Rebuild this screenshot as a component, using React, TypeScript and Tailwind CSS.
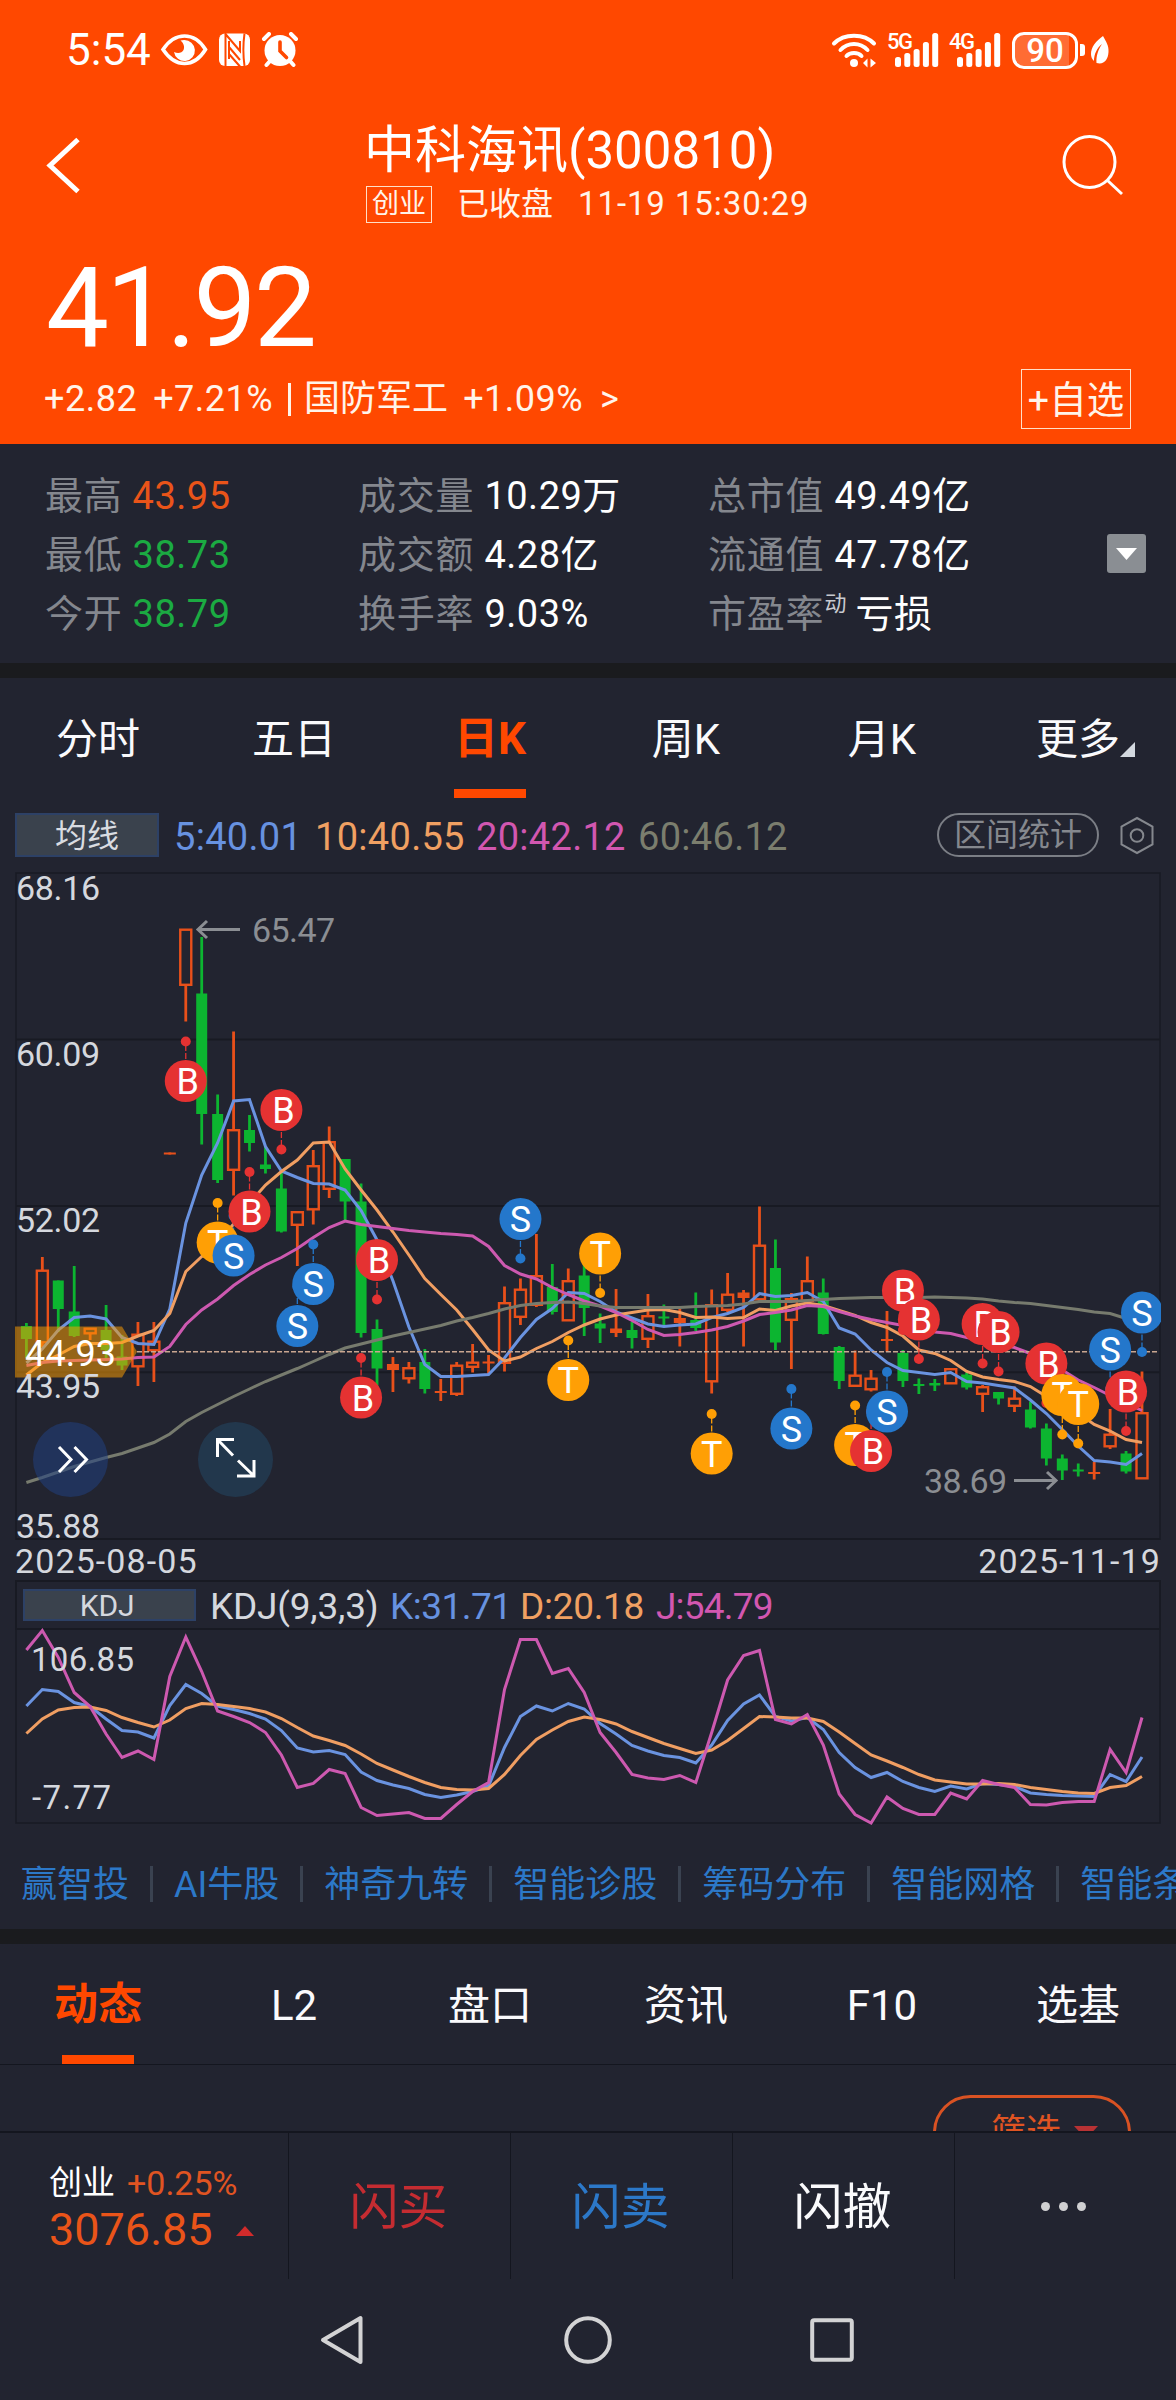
type Kind = "r" | "g" | "f";

// kind, body top, body bottom, high, low  (r = hollow up, f = flat up, g = down)
const candles: [Kind, number, number, number, number][] = [
  ["g", 1326, 1339, 1323, 1358], ["r", 1270, 1343, 1257, 1347], ["g", 1280.5, 1309, 1280.5, 1332],
  ["g", 1311.5, 1336, 1266, 1337], ["r", 1328, 1334, 1328, 1340], ["g", 1330, 1350, 1305, 1358],
  ["g", 1356.5, 1365.5, 1335, 1370], ["r", 1334, 1367, 1322, 1386], ["r", 1341, 1351, 1322, 1382],
  ["f", 1152.5, 1154.5, 1152.5, 1154.5], ["r", 929, 985.5, 929, 1021.5], ["g", 993.5, 1114, 937, 1144.5],
  ["g", 1114, 1180, 1094.5, 1183], ["r", 1129.5, 1170.5, 1031.5, 1195.5], ["g", 1130, 1143, 1115, 1151.5],
  ["g", 1164.5, 1169, 1147, 1173.5], ["g", 1188.5, 1231.5, 1171.5, 1232.5], ["r", 1211.5, 1225.5, 1211.5, 1266],
  ["r", 1165.5, 1210, 1150, 1224.5], ["r", 1141.5, 1189.5, 1126.5, 1198], ["g", 1159, 1201.5, 1159, 1220],
  ["g", 1201.5, 1333, 1183.5, 1337.5], ["g", 1329, 1368.5, 1319.5, 1385.5], ["f", 1364, 1370, 1357, 1392],
  ["r", 1367.5, 1379, 1362, 1383.5], ["g", 1362, 1389, 1349, 1393.5], ["f", 1391, 1393, 1379, 1401],
  ["r", 1365, 1394.5, 1362, 1396], ["r", 1362, 1367.5, 1344, 1372.5], ["f", 1361.5, 1363.5, 1355, 1375],
  ["r", 1302.5, 1363.5, 1286.5, 1371.5], ["r", 1289, 1317.5, 1278.5, 1325], ["r", 1275.5, 1305.5, 1234, 1307],
  ["g", 1287, 1312, 1264, 1314.5], ["r", 1280.5, 1321, 1268.5, 1321], ["g", 1275.5, 1308, 1263, 1336],
  ["g", 1323.5, 1328.5, 1313.5, 1343], ["f", 1328.5, 1333, 1289, 1337], ["g", 1330, 1338, 1322, 1348.5],
  ["r", 1315.5, 1339.5, 1294, 1348], ["g", 1316.5, 1318.5, 1304.5, 1326], ["f", 1318, 1323, 1309, 1346.5],
  ["g", 1320, 1328, 1292.5, 1331], ["r", 1304.5, 1382, 1289.5, 1393.5], ["r", 1294, 1310.5, 1273, 1312],
  ["f", 1292.5, 1298, 1290, 1346.5], ["r", 1245, 1300, 1206.5, 1303], ["g", 1268, 1342.5, 1239.5, 1350],
  ["r", 1298.5, 1320.5, 1293, 1369], ["r", 1280.5, 1301.5, 1256.5, 1303], ["g", 1292.5, 1334, 1278.5, 1334.5],
  ["g", 1347, 1381, 1346, 1389], ["r", 1375, 1386.5, 1350.5, 1387], ["r", 1378, 1390, 1370, 1391.5],
  ["f", 1339, 1341, 1311, 1352], ["g", 1353, 1381, 1350, 1387], ["g", 1384, 1386, 1378.5, 1394],
  ["g", 1383, 1385.5, 1379, 1391], ["r", 1368.5, 1384, 1368.5, 1384], ["g", 1374.5, 1387.5, 1372.5, 1389.5],
  ["r", 1386.5, 1394.5, 1385, 1412], ["g", 1392, 1398.5, 1392, 1404.5], ["r", 1398, 1406.5, 1386.5, 1412],
  ["g", 1409.5, 1427.5, 1401.5, 1428.5], ["g", 1428.5, 1458.5, 1423.5, 1465.5], ["g", 1458.5, 1470.5, 1454.5, 1480],
  ["g", 1469.5, 1471.5, 1463.5, 1476.5], ["f", 1472, 1474, 1462, 1479.5], ["r", 1434, 1447, 1409, 1449],
  ["g", 1453.5, 1471.5, 1451, 1473.5], ["r", 1412.5, 1479, 1371.5, 1479],
];

const ma5 = [1363, 1349, 1330, 1317.5, 1316, 1319, 1337.5, 1343.5, 1344.5, 1309, 1223, 1175, 1143, 1101, 1099.5, 1146.5, 1171, 1177.5, 1183.5, 1184, 1190, 1210.5, 1240, 1281, 1327, 1364.5, 1376.5, 1376.5, 1375.5, 1374.5, 1358, 1337.5, 1319.5, 1308.5, 1292.5, 1293.5, 1301.5, 1312, 1318, 1324, 1326.5, 1325, 1324, 1317.5, 1313.5, 1307.5, 1293.5, 1296.5, 1295.5, 1292.5, 1301.5, 1328, 1334, 1350, 1362.5, 1370.5, 1372.5, 1374.5, 1372.5, 1381.5, 1383, 1385.5, 1388, 1400, 1413.5, 1429.5, 1446, 1460.5, 1462, 1464.5, 1453.5];
const ma10 = [1375, 1362.5, 1355, 1346.5, 1343.5, 1343.5, 1342.5, 1336, 1330.5, 1313.5, 1271.5, 1256.5, 1243, 1224, 1203, 1185, 1171.5, 1160, 1143, 1142, 1169, 1190, 1210, 1232, 1255, 1278.5, 1294.5, 1310, 1329.5, 1350, 1361, 1357, 1348.5, 1341.5, 1332.5, 1325, 1319, 1315, 1312.5, 1310, 1309.5, 1312.5, 1317.5, 1317, 1318.5, 1317.5, 1309, 1310.5, 1306, 1303, 1305.5, 1310.5, 1315.5, 1322.5, 1327.5, 1336, 1350, 1353.5, 1360.5, 1371.5, 1377, 1379.5, 1381.5, 1386.5, 1396.5, 1405, 1413, 1424.5, 1431, 1439.5, 1442.5];
const ma20 = [1365.5, 1362.5, 1361, 1360.5, 1360, 1359.5, 1359, 1357.5, 1357, 1346.5, 1324.5, 1310, 1299, 1285.5, 1274.5, 1265, 1257.5, 1248.5, 1237.5, 1227.5, 1221, 1224.5, 1226.5, 1228.5, 1230.5, 1232, 1233.5, 1234.5, 1236, 1246.5, 1265.5, 1274, 1279, 1287.5, 1294.5, 1301, 1306, 1312.5, 1320.5, 1329.5, 1335.5, 1334.5, 1332.5, 1330, 1326.5, 1321, 1314.5, 1312.5, 1310, 1305.5, 1306.5, 1311.5, 1316, 1319.5, 1322.5, 1325.5, 1328.5, 1332, 1333.5, 1337.5, 1340, 1344, 1347.5, 1353.5, 1361.5, 1370, 1380, 1387.5, 1395.5, 1403.5, 1410.5];
const ma60 = [1482.5, 1477.5, 1472, 1466.5, 1462, 1457.5, 1453.5, 1448, 1442.5, 1434, 1421.5, 1412.5, 1404.5, 1396.5, 1389, 1381.5, 1375, 1368.5, 1361.5, 1354.5, 1348, 1344, 1340, 1336, 1332.5, 1329, 1325.5, 1321, 1317.5, 1313.5, 1309, 1305.5, 1303.5, 1302.5, 1302, 1303.5, 1306, 1307.5, 1307.5, 1307.5, 1307.5, 1307.5, 1306.5, 1306, 1305.5, 1304, 1301.5, 1301.5, 1301.5, 1300.5, 1299.5, 1298.5, 1298, 1297.5, 1297.5, 1297.5, 1297.5, 1297, 1297.5, 1298, 1299, 1301, 1302.5, 1303.5, 1305.5, 1307.5, 1309.5, 1312, 1313.5, 1318.5, 1320];

const lineJ = [1650, 1630.5, 1657.5, 1692.5, 1706.5, 1734, 1757.5, 1751, 1759.5, 1676.5, 1637, 1671.5, 1711, 1716.5, 1722.5, 1732.5, 1755, 1787.5, 1783.5, 1769.5, 1773.5, 1807.5, 1815.5, 1814, 1812.5, 1818.5, 1818.5, 1804.5, 1791.5, 1782.5, 1689.5, 1639.5, 1639.5, 1673.5, 1668.5, 1692.5, 1732.5, 1752.5, 1774.5, 1778, 1779.5, 1775.5, 1782.5, 1732.5, 1680, 1655.5, 1650.5, 1719.5, 1724, 1714.5, 1745, 1794, 1814.5, 1823, 1797, 1808.5, 1814.5, 1814.5, 1793, 1799, 1780.5, 1784.5, 1787.5, 1804.5, 1805, 1802.5, 1801.5, 1801.5, 1749.5, 1772.5, 1717.5];
const lineK = [1706, 1689.5, 1691.5, 1702.5, 1706.5, 1719, 1730.5, 1732, 1738, 1705.5, 1684.5, 1693.5, 1706, 1709.5, 1713.5, 1719, 1730.5, 1748, 1752, 1750.5, 1754.5, 1772, 1780.5, 1785, 1788.5, 1794.5, 1797.5, 1795, 1791.5, 1786, 1747.5, 1716.5, 1706, 1711, 1703.5, 1709, 1723.5, 1734, 1745.5, 1751, 1755.5, 1757.5, 1763, 1745, 1720.5, 1704, 1695, 1716.5, 1721, 1717.5, 1729.5, 1752.5, 1767.5, 1777.5, 1772.5, 1781.5, 1787.5, 1791.5, 1786, 1789, 1783.5, 1784.5, 1786.5, 1793, 1794.5, 1795.5, 1796, 1796.5, 1774.5, 1781.5, 1757];
const lineD = [1733.5, 1719, 1710, 1707.5, 1707, 1710.5, 1717.5, 1722.5, 1727, 1720, 1708.5, 1703.5, 1704.5, 1706.5, 1708.5, 1712, 1718.5, 1727.5, 1736, 1740.5, 1745.5, 1754, 1763.5, 1770, 1776.5, 1782.5, 1787.5, 1789.5, 1790, 1788.5, 1774.5, 1755.5, 1739.5, 1730, 1721.5, 1717, 1719.5, 1724, 1731.5, 1737.5, 1743.5, 1748.5, 1753.5, 1750, 1740.5, 1728.5, 1716.5, 1717, 1718, 1718, 1721.5, 1732, 1743.5, 1755, 1761, 1767.5, 1774.5, 1780, 1782, 1784, 1784, 1783.5, 1784.5, 1787.5, 1789.5, 1791.5, 1793, 1793.5, 1787.5, 1785.5, 1776.5];

// candle index, letter, centre y, side of the anchor dot (-1 above, 1 below)
const markers: [number, "B" | "S" | "T", number, number][] = [
  [10, "B", 1081, -1], [12, "T", 1242.5, -1], [13, "S", 1255.5, -1], [14, "B", 1211.5, -1],
  [16, "B", 1110, 1], [17, "S", 1326, -1], [18, "S", 1284, -1], [21, "B", 1397.5, -1],
  [22, "B", 1260, 1], [31, "S", 1219, 1], [34, "T", 1380, -1], [36, "T", 1253.5, 1],
  [43, "T", 1453.5, -1], [48, "S", 1428.5, -1], [52, "T", 1445, -1], [53, "B", 1451, -1],
  [54, "S", 1411.5, -1], [55, "B", 1290.5, 1], [56, "B", 1319.5, 1], [60, "B", 1324, 1],
  [61, "B", 1332, 1], [64, "B", 1363.5, 1], [65, "T", 1395, 1], [66, "T", 1404, 1],
  [68, "S", 1349.5, 1], [69, "B", 1391.5, 1], [70, "S", 1312.5, 1],
];

const markerColor = { B: "#e53232", S: "#2477cb", T: "#ff9f05" };
const UP = "#e8501a";
const DOWN = "#0cb530";

const px = (i: number) => 26.4 + i * 15.937;
const toPoints = (ys: number[]) => ys.map((y, i) => `${px(i).toFixed(1)},${y}`).join(" ");

const stats = [
  [
    { label: "最高", value: "43.95", color: "text-[#ea5419]" },
    { label: "最低", value: "38.73", color: "text-[#1bab42]" },
    { label: "今开", value: "38.79", color: "text-[#1bab42]" },
  ],
  [
    { label: "成交量", value: "10.29万", color: "text-white" },
    { label: "成交额", value: "4.28亿", color: "text-white" },
    { label: "换手率", value: "9.03%", color: "text-white" },
  ],
  [
    { label: "总市值", value: "49.49亿", color: "text-white" },
    { label: "流通值", value: "47.78亿", color: "text-white" },
    { label: "市盈率", sup: "动", value: "亏损", color: "text-white" },
  ],
];

const links = ["赢智投", "AI牛股", "神奇九转", "智能诊股", "筹码分布", "智能网格", "智能条件"];

function SignalBars() {
  return (
    <svg width="44" height="34" viewBox="0 0 44 34" fill="#fff">
      <rect x="0" y="24" width="6" height="10" rx="2.5" />
      <rect x="9.3" y="20" width="6" height="14" rx="2.5" />
      <rect x="18.6" y="16" width="6" height="18" rx="2.5" />
      <rect x="27.9" y="9" width="6" height="25" rx="2.5" />
      <rect x="37.2" y="0" width="6" height="34" rx="2.5" />
    </svg>
  );
}

function StatusBar() {
  return (
    <div className="flex h-[100px] items-center pl-[66px] text-white">
      <span className="w-[94px] text-[44px] leading-[60px]">5:54</span>
      <svg width="140" height="36" viewBox="160 32 140 36">
        <path d="M163 49.500C170 39 177 36 184.500 36S199 39 205.500 49.500C199 60 192 63.500 184.500 63.500S170 60 163 49.500Z" fill="none" stroke="#fff" strokeWidth="3.600" />
        <path d="M184 40a10.500 10.500 0 1 1-10 12c4 2 8 1 9.500-2s0-7-3-9.500z" fill="#fff" />
        <rect x="219" y="33.500" width="31" height="32.500" rx="6" fill="#fff" />
        <path d="M225 33.500L240 51V41M225.500 33V66M229 47L240 60M229 54L240 66.500M244.500 33.500C243 44 243 55 244.500 66M229 41V59" fill="none" stroke="#ff4800" strokeWidth="2" />
        <circle cx="280" cy="50.500" r="15.500" fill="#fff" />
        <path d="M264 39l5-5M296 39l-5-5M270 61l-3.500 4M290 61l3.500 4" stroke="#fff" strokeWidth="4" strokeLinecap="round" />
        <path d="M280 42v9l6.500 6.500" fill="none" stroke="#ff4800" strokeWidth="3.600" strokeLinecap="round" />
      </svg>

      <svg className="ml-[531px]" width="46" height="36" viewBox="831 31 46 36" fill="none" stroke="#fff" strokeWidth="4" strokeLinecap="round">
        <path d="M834 42.500C844 32 864 32 874 42.500" />
        <path d="M840.500 49C848 41 860 41 867.500 49" />
        <path d="M846.500 55C850 51 858 51 861.500 55" />
        <circle cx="854" cy="62" r="4" fill="#fff" stroke="none" />
        <path d="M863 62l4.500-4.500v9zM876 62l-5.500-4.500v9z" fill="#fff" stroke="none" />
      </svg>
      <div className="relative ml-[18px] h-[34px] w-[44px]">
        <span className="absolute -left-[8px] top-0 text-[22px] font-medium leading-[17px] tracking-[-1.5px]">5G</span>
        <SignalBars />
      </div>
      <div className="relative ml-[18px] h-[34px] w-[44px]">
        <span className="absolute -left-[8px] top-0 text-[22px] font-medium leading-[17px] tracking-[-1.5px]">4G</span>
        <SignalBars />
      </div>
      <div className="ml-[11px] flex h-[37px] w-[66px] items-center justify-center rounded-[12px] border-[3px] border-white bg-[linear-gradient(90deg,#ff6c34_90%,#ff4800_90%)] text-[33px] font-medium leading-[37px]">
        90
      </div>
      <div className="ml-[2px] h-[12px] w-[5px] rounded-r-[3px] bg-white" />
      <svg className="ml-[5px]" width="20" height="30" viewBox="0 0 20 30">
        <path d="M13 1C6 6 1 12 1 19c0 3 1 5 3 7C4 19 7 13 12 9 8 15 6 21 6.500 28 14 30 18 25 18.500 17 19 10 16 7 13 1z" fill="#fff" />
      </svg>
    </div>
  );
}

function Header() {
  return (
    <header className="h-[444px] bg-[#ff4800] text-white">
      <StatusBar />

      <div className="flex h-[134px]">
        <div className="w-[364px] pl-[45px] pt-[36px]">
          <svg width="38" height="58" viewBox="46 136 38 58">
            <path d="M79 139.500L51 165.500L79 191.500" fill="none" stroke="#fff" strokeWidth="5" />
          </svg>
        </div>
        <div className="pt-[20px]">
          <h1 className="whitespace-nowrap text-[51px] leading-[61px]">中科海讯(300810)</h1>
          <div className="flex h-[46px] items-center whitespace-nowrap">
            <span className="ml-[2px] h-[37px] w-[66px] border border-[#ffe0c8] text-center text-[27px] leading-[35px] text-[#fff4ea]">
              创业
            </span>
            <span className="ml-[25px] text-[32px] leading-[46px] text-[#fff4ea]">已收盘</span>
            <span className="ml-[25px] text-[33px] leading-[46px] tracking-[0.9px] text-[#fff4ea]">11-19 15:30:29</span>
          </div>
        </div>
        <svg className="ml-auto mr-[50px] mt-[32px]" width="66" height="66" viewBox="1060 132 66 66" fill="none" stroke="#fff" strokeWidth="3">
          <circle cx="1089.500" cy="162" r="25.500" />
          <path d="M1107 180L1122 194" />
        </svg>
      </div>

      <p className="mt-[18px] pl-[46px] text-[112px] leading-[112px] tracking-[-2.6px]">41.92</p>

      <div className="mt-[5px] flex h-[60px] items-center pl-[44px] pr-[45px] text-[36px] leading-[60px] text-[#fff4ea]">
        <span className="tracking-[0.5px]">+2.82</span>
        <span className="ml-[16px] tracking-[0.5px]">+7.21%</span>
        <span className="ml-[15px] h-[33px] w-[3px] bg-[#fff4ea]" />
        <span className="ml-[13px] text-[36px]">国防军工</span>
        <span className="ml-[15px] tracking-[0.5px]">+1.09%</span>
        <span className="ml-[17px]">&gt;</span>
        <button className="ml-auto h-[60px] w-[110px] whitespace-nowrap border border-[#ffe0c8] text-[37.500px] leading-[60px]">
          +自选
        </button>
      </div>
    </header>
  );
}

function Stats() {
  return (
    <section className="relative flex h-[219px] pl-[45px] pt-[23px] text-[38px]">
      {stats.map((col, c) => (
        <div key={c} className={c === 0 ? "w-[313px]" : c === 1 ? "w-[350px]" : "w-[330px]"}>
          {col.map((s) => (
            <div key={s.label} className="flex h-[59px] whitespace-nowrap leading-[59px]">
              <span className="text-[#84878e] tracking-[0.8px]">{s.label}</span>
              {"sup" in s && <span className="text-[22px] leading-[38px] text-[#c8cacf]">{s.sup}</span>}
              <span className={`${"sup" in s ? "ml-[9px]" : "ml-[10px]"} tracking-[0.5px] ${s.color}`}>{s.value}</span>
            </div>
          ))}
        </div>
      ))}
      <button className="ml-auto mr-[30px] mt-[67px] flex h-[39px] w-[39px] items-center justify-center rounded-[3px] bg-[#8a8e93]">
        <svg width="21" height="12" viewBox="0 0 21 12">
          <path d="M0 0h21L10.500 12z" fill="#fff" />
        </svg>
      </button>
    </section>
  );
}

function Tabs({ items, active }: { items: string[]; active: number }) {
  return (
    <nav className="grid h-[120px] grid-cols-6">
      {items.map((item, i) => (
        <div key={item} className="relative flex flex-col items-center">
          <span
            className={`flex h-[111px] items-end pb-[19px] leading-[61px] ${
              i === active ? "text-[44px] font-bold text-[#ff4800]" : "text-[42px] text-[#fafafc]"
            }`}
          >
            {item}
          </span>
          {i === active && <span className="h-[9px] w-[72px] bg-[#ff4800]" />}
          {item === "更多" && (
            <svg className="absolute left-[140px] top-[64px]" width="15" height="15" viewBox="0 0 15 15">
              <path d="M15 0v15H0z" fill="#d3d8df" />
            </svg>
          )}
        </div>
      ))}
    </nav>
  );
}

function AverageRow() {
  return (
    <div className="flex h-[74px] items-center pl-[15px] text-[38px] leading-[44px] tracking-[0.3px]">
      <button className="h-[44px] w-[144px] border-2 border-[#2d4166] bg-[#3a424d] text-[32px] leading-[42px] tracking-normal text-[#d9dce1]">
        均线
      </button>
      <span className="ml-[15px] w-[141px] pt-[4px] text-[#6792e0]">5:40.01</span>
      <span className="w-[161px] pt-[4px] text-[#f0a062]">10:40.55</span>
      <span className="w-[162px] pt-[4px] text-[#d257b0]">20:42.12</span>
      <span className="pt-[4px] text-[#7b7e6e]">60:46.12</span>
      <button className="ml-auto h-[44px] w-[162px] rounded-full border-2 border-[#7b7e85] text-[32px] leading-[41px] tracking-normal text-[#85888e]">
        区间统计
      </button>
      <svg className="ml-[20px] mr-[21px]" width="36" height="40" viewBox="1119 815.500 36 40" fill="none" stroke="#85888e" strokeWidth="2">
        <path d="M1137 818.500L1152.500 827V845L1137 853.500L1121.500 845V827Z" />
        <circle cx="1137" cy="836" r="6.300" />
      </svg>
    </div>
  );
}

function Marker({ i, kind, y }: { i: number; kind: "B" | "S" | "T"; y: number }) {
  return (
    <g>
      <circle cx={px(i)} cy={y} r="21" fill={markerColor[kind]} />
      <text x={px(i) + (kind === "B" ? 2 : 0)} y={y + 13} fontSize="36" fill="#fff" textAnchor="middle">
        {kind}
      </text>
    </g>
  );
}

function PriceChart() {
  return (
    <svg className="ml-[15px] block" width="1146" height="668" viewBox="15 872 1146 668">
      <g stroke="#181a23" strokeWidth="2" fill="none">
        <path d="M16 1540V873H1160V1540" strokeWidth="1.500" />
        <path d="M16 1039.500H1160M16 1206H1160M16 1372.300H1160M16 1539H1160" />
      </g>

      {candles.map(([k, top, bottom, high, low], i) => {
        const color = k === "g" ? DOWN : UP;
        const x = px(i);
        if (k === "r") {
          return (
            <g key={i} stroke={color} fill="none">
              <path d={`M${x} ${high}V${top}M${x} ${bottom}V${low}`} strokeWidth="2.800" />
              <rect x={x - 5.5} y={top + 0.7} width="11" height={bottom - top - 1.4} strokeWidth="2.400" />
            </g>
          );
        }
        return (
          <g key={i} fill={color}>
            <rect x={x - 1.4} y={high} width="2.800" height={low - high} />
            <rect x={k === "g" ? x - 5.500 : x - 6} y={top} width={k === "g" ? 11 : 12} height={bottom - top} />
          </g>
        );
      })}

      <g fill="none" strokeWidth="3">
        <polyline points={toPoints(ma5)} stroke="#6a93e0" />
        <polyline points={toPoints(ma10)} stroke="#f09e62" />
        <polyline points={toPoints(ma20)} stroke="#cd59b0" />
        <polyline points={toPoints(ma60)} stroke="#777b6e" />
      </g>
      <path d="M137 1351.700H1158" stroke="#c9a690" strokeWidth="1.500" strokeDasharray="5 2" />

      {/* anchor dots first, badges go over them */}
      {markers.map(([i, kind, y, dir]) => (
        <g key={i}>
          <path d={`M${px(i)} ${y + dir * 22}V${y + dir * 36}`} stroke={markerColor[kind]} strokeWidth="1.300" strokeDasharray="6 2" />
          <circle cx={px(i)} cy={y + dir * 39.5} r="5" fill={markerColor[kind]} />
        </g>
      ))}
      {markers.map(([i, kind, y]) => (
        <Marker key={i} i={i} kind={kind} y={y} />
      ))}

      <g fill="none" stroke="#8b8e93" strokeWidth="3">
        <path d="M240 929.500H198M207 921L198 929.500L207 938" />
        <path d="M1014 1480.500H1056M1047 1472L1056 1480.500L1047 1489" />
      </g>
      <g fill="#8b8e93" fontSize="34">
        <text x="252" y="942" textLength="83">65.47</text>
        <text x="924" y="1492.500" textLength="83">38.69</text>
      </g>

      <path d="M15 1326.500H122L137 1351.700L122 1377.500H15Z" fill="#ffa000" opacity="0.520" />
      <g fill="#d5d8de" fontSize="34">
        <text x="16" y="900" textLength="84">68.16</text>
        <text x="16" y="1066" textLength="84">60.09</text>
        <text x="16" y="1232" textLength="84">52.02</text>
        <text x="16" y="1398" textLength="84">43.95</text>
        <text x="16" y="1538" textLength="84">35.88</text>
      </g>
      <text x="25" y="1365.500" fontSize="36" fill="#fff" textLength="91">44.93</text>

      <circle cx="70.500" cy="1459.500" r="37.500" fill="#20407f" opacity="0.550" />
      <circle cx="235.500" cy="1459.500" r="37.500" fill="#224765" opacity="0.550" />
      <g fill="none" stroke="#fff" strokeWidth="3">
        <path d="M59 1447L71 1459.500L59 1472M74.500 1447L86.500 1459.500L74.500 1472" />
        <path d="M217.500 1457V1439.500H234M217.500 1439.500L233 1455.500" />
        <path d="M237 1476H254V1460M254 1476L238 1460.500" />
      </g>
    </svg>
  );
}

function KdjPanel() {
  return (
    <>
      <div className="mx-[15px] flex h-[50px] items-center border-2 border-[#181a23] pl-[6px] text-[37px] leading-[46px] tracking-[-0.2px]">
        <button className="h-[32px] w-[173px] border-2 border-[#2d4166] bg-[#3a424d] pr-[5px] text-[30px] leading-[30px] text-[#d5d8de]">
          KDJ
        </button>
        <span className="ml-[14px] w-[180px] pt-[3px] text-[#d5d8de]">KDJ(9,3,3)</span>
        <span className="w-[130px] pt-[3px] tracking-[-0.5px] text-[#6792e0]">K:31.71</span>
        <span className="w-[136px] pt-[3px] tracking-[-0.3px] text-[#f0a062]">D:20.18</span>
        <span className="pt-[3px] tracking-[-0.8px] text-[#d257b0]">J:54.79</span>
      </div>
      <svg className="ml-[15px] block overflow-visible" width="1146" height="194" viewBox="15 1630 1146 194">
        <path d="M16 1630V1823H1160V1630" fill="none" stroke="#181a23" strokeWidth="1.500" />
        <g fill="none" strokeWidth="3">
          <polyline points={toPoints(lineK)} stroke="#6a93e0" />
          <polyline points={toPoints(lineD)} stroke="#f09e62" />
          <polyline points={toPoints(lineJ)} stroke="#cd59b0" />
        </g>
        <g fill="#d5d8de" fontSize="33">
          <text x="31" y="1671" textLength="103">106.85</text>
          <text x="32" y="1808.500" textLength="79">-7.77</text>
        </g>
      </svg>
    </>
  );
}

function Links() {
  return (
    <div className="flex h-[105px] items-center overflow-hidden pl-[21px] pt-[17px]">
      {links.map((l, i) => (
        <div key={l} className="flex shrink-0 items-center">
          {i > 0 && <span className="mx-[21px] -mt-[3px] h-[36px] w-[3px] bg-[#3a4250]" />}
          <span className="whitespace-nowrap text-[36px] leading-[48px] text-[#2c78c8]">{l}</span>
        </div>
      ))}
    </div>
  );
}

function BottomBar() {
  return (
    <div className="flex h-[148px] border-t-2 border-[#14161f]">
      <div className="h-full w-[288px] pl-[49px] pt-[30px]">
        <div className="flex items-center leading-[40px]">
          <span className="text-[33px] text-white">创业</span>
          <span className="ml-[12px] text-[34px] text-[#e05422]">+0.25%</span>
        </div>
        <div className="flex items-center pt-[4px] leading-[46px]">
          <span className="text-[45px] text-[#ea5419]">3076.85</span>
          <svg className="ml-[23px] mt-[2px]" width="18" height="10" viewBox="0 0 18 10">
            <path d="M9 0l9 10H0z" fill="#d22b2b" />
          </svg>
        </div>
      </div>
      <button className="w-[222px] border-l border-[#14161f] pr-[2px] pt-[3px] text-[49px] leading-[60px] text-[#c52c31]">闪买</button>
      <button className="w-[222px] border-l border-[#14161f] pr-[2px] pt-[3px] text-[49px] leading-[60px] text-[#2c78c8]">闪卖</button>
      <button className="w-[222px] border-l border-[#14161f] pr-[2px] pt-[3px] text-[49px] leading-[60px] text-[#fafafc]">闪撤</button>
      <button className="flex w-[222px] items-center justify-center gap-[9px] border-l border-[#14161f] pr-[4px]">
        <span className="h-[9px] w-[9px] rounded-full bg-[#d0d0d2]" />
        <span className="h-[9px] w-[9px] rounded-full bg-[#d0d0d2]" />
        <span className="h-[9px] w-[9px] rounded-full bg-[#d0d0d2]" />
      </button>
    </div>
  );
}

function SystemNav() {
  return (
    <div className="flex h-[121px] items-center pl-[318px]">
      <svg width="46" height="52" viewBox="0 0 46 52" fill="none" stroke="#d3d3d4" strokeWidth="4" strokeLinejoin="round">
        <path d="M42.500 4V48L5 26Z" />
      </svg>
      <svg className="ml-[200px]" width="48" height="48" viewBox="0 0 48 48" fill="none" stroke="#d3d3d4" strokeWidth="4">
        <circle cx="24" cy="24" r="21.800" />
      </svg>
      <svg className="ml-[197px]" width="46" height="46" viewBox="0 0 46 46" fill="none" stroke="#d3d3d4" strokeWidth="4">
        <rect x="3.200" y="3.200" width="39.600" height="39.600" rx="2" />
      </svg>
    </div>
  );
}

export default function App() {
  return (
    <div className="h-[2400px] w-[1176px] overflow-hidden bg-[#222430] font-['Roboto','Noto_Sans_CJK_SC',sans-serif]">
      <Header />
      <Stats />
      <div className="h-[15px] bg-[#1a1b1e]" />

      <Tabs items={["分时", "五日", "日K", "周K", "月K", "更多"]} active={2} />
      <AverageRow />
      <PriceChart />
      <div className="flex h-[40px] items-center justify-between px-[15px] pt-[2px] text-[34px] leading-[38px] tracking-[1.1px] text-[#d5d8de]">
        <span>2025-08-05</span>
        <span>2025-11-19</span>
      </div>
      <KdjPanel />
      <Links />
      <div className="h-[15px] bg-[#1a1b1e]" />

      <Tabs items={["动态", "L2", "盘口", "资讯", "F10", "选基"]} active={0} />
      <div className="h-[67px] overflow-hidden border-t border-[#14161f] pr-[45px] pt-[30px]">
        <button className="ml-auto flex h-[75px] w-[198px] items-center rounded-full border-[3px] border-[#d95223] pl-[55px] text-[35px] leading-[60px] text-[#e05422]">
          筛选
          <svg className="ml-[13px]" width="24" height="13" viewBox="0 0 24 13">
            <path d="M0 0h24L12 13z" fill="#b83234" />
          </svg>
        </button>
      </div>
      <BottomBar />
      <SystemNav />
    </div>
  );
}
